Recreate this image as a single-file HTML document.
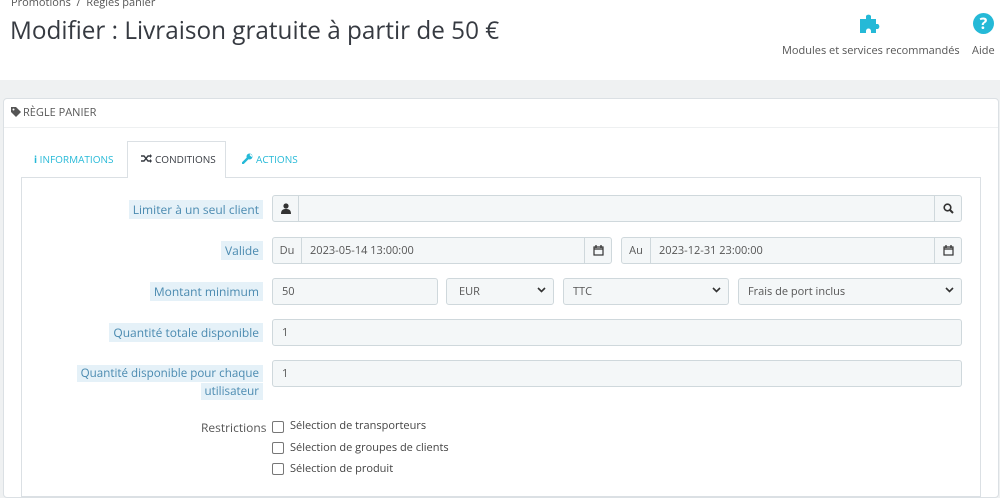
<!DOCTYPE html>
<html><head><meta charset="utf-8"><style>
*{box-sizing:border-box;margin:0;padding:0}
body{width:1000px;height:475px;overflow:hidden;background:#eff1f2;font-family:"Open Sans","Liberation Sans",sans-serif;color:#363a41;position:relative}
.hdr{position:absolute;left:0;top:0;width:1000px;height:80px;background:#fff}
.a{position:absolute;white-space:nowrap}
.panel{position:absolute;left:3px;top:98px;width:996px;height:400px;background:#fff;border:1px solid #dbe0e4;border-radius:4px}
.box{position:absolute;left:21px;top:177px;width:960px;height:320px;border:1px solid #dbe0e4;background:#fff}
.lbl{position:absolute;right:737px;font-size:12px;color:#4a8ab0;text-align:right;line-height:18px;white-space:nowrap}
.lbl span{background:#e5f1f8;padding:1px 4px;-webkit-box-decoration-break:clone;box-decoration-break:clone}
.in{position:absolute;height:27px;background:#f4f7f8;border:1px solid #cfd8dc;border-radius:3px;font-size:11px;color:#555;line-height:25px;padding-left:9px}
.add{position:absolute;top:0;bottom:0;border-color:#cfd8dc;border-style:solid;border-width:0;display:flex;align-items:center;justify-content:center}
.cb{position:absolute;left:272px;width:12px;height:12px;border:1px solid #777;border-radius:2px;background:#fff}
.ct{position:absolute;left:290px;font-size:11px;color:#444}
.chev{position:absolute;right:7px;top:8px}
</style></head><body>
<div class="hdr"></div>
<div class="a" style="left:11px;top:-5px;font-size:11px;color:#555">Promotions &nbsp;/&nbsp; Règles panier</div>
<div class="a" style="left:10px;top:14px;font-size:24.3px;color:#363a41">Modifier : Livraison gratuite à partir de 50 €</div>
<svg class="a" style="left:858px;top:12px" width="24" height="22" viewBox="0 0 24 22"><path d="M2 7h6V4a3 3 0 0 1 5 0v3h5v5h2a3 3 0 0 1 0 5h-2v4h-5v-2a2.5 2.5 0 0 0-5 0v2H2z" fill="#25b9d7"/></svg>
<div class="a" style="left:782px;top:43px;font-size:11px;color:#555">Modules et services recommandés</div>
<div class="a" style="left:973px;top:13px;width:21px;height:21px;border-radius:50%;background:#25b9d7;color:#fff;font-weight:bold;font-size:16px;text-align:center;line-height:21px">?</div>
<div class="a" style="left:972px;top:43px;font-size:11px;color:#555">Aide</div>
<div class="panel">
 <div style="position:absolute;left:0;right:0;top:28px;border-top:1px solid #eef0f1"></div>
</div>
<svg class="a" style="left:11px;top:107px" width="10" height="10" viewBox="0 0 10 10"><path d="M0 0h5l5 5-5 5-5-5z" fill="#555"/><circle cx="2.5" cy="2.5" r="1" fill="#fff"/></svg>
<div class="a" style="left:23px;top:105px;font-size:11px;color:#555">RÈGLE PANIER</div>
<div class="a" style="left:34px;top:152px;font-size:10px;color:#25b9d7"><b>i</b> INFORMATIONS</div>
<div class="a" style="left:127px;top:141px;width:99px;height:37px;background:#fff;border:1px solid #dbe0e4;border-bottom:none;z-index:2"></div>
<svg class="a" style="left:141px;top:154px;z-index:3" width="11" height="9" viewBox="0 0 11 9"><path d="M0 2h3l4 5h3M0 7h3l4-5h3" stroke="#363a41" stroke-width="1.4" fill="none"/><path d="M9 0l2 2-2 2zM9 5l2 2-2 2z" fill="#363a41"/></svg>
<div class="a" style="left:155px;top:152px;font-size:10px;color:#363a41;z-index:3">CONDITIONS</div>
<svg class="a" style="left:242px;top:153px" width="11" height="11" viewBox="0 0 11 11"><path d="M1 10l5-5" stroke="#25b9d7" stroke-width="2.4" stroke-linecap="round"/><circle cx="7.5" cy="3.5" r="3" fill="#25b9d7"/><path d="M8 1.5l2 2" stroke="#fff" stroke-width="1.4"/></svg>
<div class="a" style="left:256px;top:152px;font-size:10px;color:#25b9d7">ACTIONS</div>
<div class="box"></div>

<div class="lbl" style="top:201px"><span>Limiter à un seul client</span></div>
<div class="in" style="left:272px;top:195px;width:690px"><span class="add" style="left:0;width:26px;border-right-width:1px"><svg width="10" height="11" viewBox="0 0 10 11"><circle cx="5" cy="3" r="2.6" fill="#333"/><path d="M0 11c0-4 2-5 5-5s5 1 5 5z" fill="#333"/></svg></span><span class="add" style="right:0;width:27px;border-left-width:1px"><svg width="11" height="11" viewBox="0 0 11 11"><circle cx="4.5" cy="4.5" r="3.3" stroke="#333" stroke-width="1.6" fill="none"/><path d="M7 7l3 3" stroke="#333" stroke-width="2"/></svg></span></div>

<div class="lbl" style="top:242px"><span>Valide</span></div>
<div class="in" style="left:272px;top:237px;width:340px;padding-left:37px"><span class="add" style="left:0;width:29px;border-right-width:1px">Du</span>2023-05-14 13:00:00<span class="add" style="right:0;width:27px;border-left-width:1px"><svg width="11" height="11" viewBox="0 0 11 11"><rect x="1" y="2" width="9" height="8" fill="none" stroke="#333" stroke-width="1.2"/><path d="M1 4h9M3 0v3M8 0v3" stroke="#333" stroke-width="1.3"/></svg></span></div>
<div class="in" style="left:621px;top:237px;width:341px;padding-left:37px"><span class="add" style="left:0;width:29px;border-right-width:1px">Au</span>2023-12-31 23:00:00<span class="add" style="right:0;width:27px;border-left-width:1px"><svg width="11" height="11" viewBox="0 0 11 11"><rect x="1" y="2" width="9" height="8" fill="none" stroke="#333" stroke-width="1.2"/><path d="M1 4h9M3 0v3M8 0v3" stroke="#333" stroke-width="1.3"/></svg></span></div>

<div class="lbl" style="top:283px"><span>Montant minimum</span></div>
<div class="in" style="left:272px;top:278px;width:166px">50</div>
<div class="in" style="left:446px;top:278px;width:108px;padding-left:12px">EUR<svg class="chev" width="9" height="6" viewBox="0 0 9 6"><path d="M1 1l3.5 3.5L8 1" stroke="#333" stroke-width="1.6" fill="none"/></svg></div>
<div class="in" style="left:563px;top:278px;width:166px">TTC<svg class="chev" width="9" height="6" viewBox="0 0 9 6"><path d="M1 1l3.5 3.5L8 1" stroke="#333" stroke-width="1.6" fill="none"/></svg></div>
<div class="in" style="left:738px;top:278px;width:224px">Frais de port inclus<svg class="chev" width="9" height="6" viewBox="0 0 9 6"><path d="M1 1l3.5 3.5L8 1" stroke="#333" stroke-width="1.6" fill="none"/></svg></div>

<div class="lbl" style="top:324px"><span>Quantité totale disponible</span></div>
<div class="in" style="left:272px;top:319px;width:690px">1</div>

<div class="lbl" style="top:365px;font-size:11.6px"><span>Quantité disponible pour chaque<br>utilisateur</span></div>
<div class="in" style="left:272px;top:360px;width:690px">1</div>

<div class="a" style="left:201px;top:419px;font-size:12px;color:#555">Restrictions</div>
<div class="cb" style="top:421px"></div><div class="ct" style="top:418px">Sélection de transporteurs</div>
<div class="cb" style="top:442px"></div><div class="ct" style="top:440px">Sélection de groupes de clients</div>
<div class="cb" style="top:463px"></div><div class="ct" style="top:461px">Sélection de produit</div>
</body></html>
